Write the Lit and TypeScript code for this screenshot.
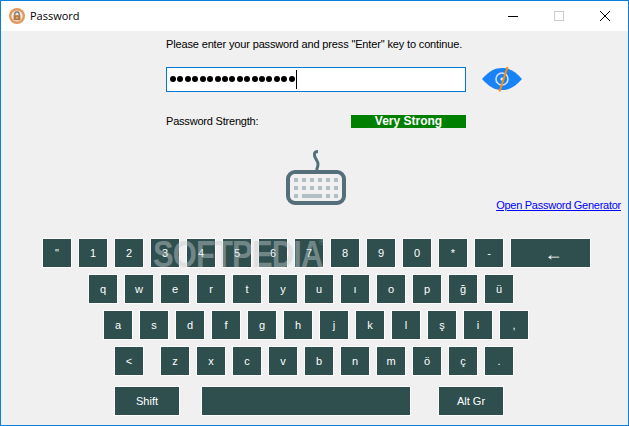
import { LitElement, html, css, svg } from "lit";
import { customElement } from "lit/decorators.js";

const rows: { cls: string; keys: string[] }[] = [
  { cls: "r2", keys: ["q", "w", "e", "r", "t", "y", "u", "ı", "o", "p", "ğ", "ü"] },
  { cls: "r3", keys: ["a", "s", "d", "f", "g", "h", "j", "k", "l", "ş", "i", ","] },
];

@customElement("app-root")
export class AppRoot extends LitElement {
  static styles = css`
    :host {
      display: block;
      width: 629px;
      height: 426px;
      box-sizing: border-box;
      border: 1px solid #0a7fdc;
      background: #f0f0f0;
      font-family: "Liberation Sans", Arial, sans-serif;
      font-size: 11px;
      color: #000;
      position: relative;
      overflow: hidden;
    }
    .title {
      height: 30px;
      background: #fff;
      display: flex;
      align-items: center;
    }
    .logo { margin-left: 8px; width: 16px; height: 16px; }
    .title-text {
      margin-left: 5px;
      font-family: "Open Sans", sans-serif;
      font-size: 11px;
      position: relative;
      top: -1px;
    }
    .controls { margin-left: auto; display: flex; }
    .ctl { width: 46px; height: 30px; display: flex; align-items: center; justify-content: center; }
    .prompt { margin: 6px 0 0 165px; height: 15px; line-height: 15px; letter-spacing: -0.145px; }
    .pw-row { margin: 14px 0 0 165px; display: flex; align-items: center; gap: 16px; }
    .input {
      width: 300px;
      height: 25px;
      box-sizing: border-box;
      border: 1px solid #0078d7;
      background: #fff;
      display: flex;
      align-items: center;
      padding-left: 3px;
      overflow: hidden;
    }
    .dots { display: flex; gap: 1.43px; }
    .dot { width: 6px; height: 6px; border-radius: 50%; background: #000; }
    .caret { width: 1px; height: 19px; background: #000; margin-left: 1px; }
    .strength { margin: 23px 0 0 165px; display: flex; align-items: center; height: 13px; }
    .strength-label { width: 185px; letter-spacing: -0.2px; position: relative; top: -1px; }
    .bar {
      width: 115px;
      height: 13px;
      background: #008000;
      color: #fff;
      font-weight: bold;
      font-size: 12px;
      line-height: 13px;
      text-align: center;
    }
    .mid { margin-top: 22px; display: flex; height: 57px; padding: 0 7px 0 285px; }
    .link {
      margin-left: auto;
      align-self: flex-end;
      color: #0000ff;
      text-decoration: underline;
      line-height: 15px;
      letter-spacing: -0.26px;
      margin-bottom: -6px;
    }
    .board { margin-top: 31px; display: flex; flex-direction: column; gap: 6px; }
    .row { display: flex; gap: 6px; }
    .r1 { padding-left: 41px; }
    .r2 { padding-left: 87px; }
    .r3 { padding-left: 102px; }
    .r4 { padding-left: 113px; }
    .r5 { padding-left: 113px; margin-top: 4px; gap: 0; }
    .key {
      width: 30px;
      height: 30px;
      box-sizing: border-box;
      border: 1px solid #fff;
      background: #2f4f4f;
      color: #fff;
      display: flex;
      align-items: center;
      justify-content: center;
      font-size: 11px;
    }
    .back { width: 81px; font-size: 18px; padding: 2px 0 0 6px; }
    .lt { margin-right: 10px; }
    .shift { width: 66px; }
    .space { width: 210px; margin: 0 27px 0 21px; }
    .mark {
      position: absolute;
      left: 152px;
      top: 231px;
      font-family: "Liberation Sans", sans-serif;
      font-weight: bold;
      font-size: 36px;
      line-height: 45px;
      letter-spacing: -1px;
      color: rgba(200, 205, 205, 0.45);
      white-space: nowrap;
      transform: scaleX(0.86);
      transform-origin: left center;
    }
    .mark sup { font-size: 9px; font-weight: normal; vertical-align: 22px; line-height: 0; letter-spacing: 0; margin-left: -4px; }
  `;

  private key(k: string, cls = "") {
    return html`<div class="key ${cls}">${k}</div>`;
  }

  render() {
    return html`
      <div class="title">
        <svg class="logo" viewBox="0 0 16 16">
          <circle cx="8" cy="8" r="8" fill="#e09a5f" />
          <circle cx="8" cy="8" r="5.6" fill="#f4e8dc" />
          <path d="M5.8 7.500V6a2.200 2.200 0 0 1 4.400 0v1.500" fill="none" stroke="#6f6f6f" stroke-width="1.200" />
          <rect x="4.600" y="7.200" width="6.800" height="5" fill="#b5793f" />
          <rect x="7.500" y="8.800" width="1" height="1.800" fill="#f4e8dc" />
        </svg>
        <span class="title-text">Password</span>
        <div class="controls">
          <div class="ctl">
            <svg width="10" height="10" viewBox="0 0 10 10"><path d="M0 5.500H10" stroke="#000" stroke-width="1" /></svg>
          </div>
          <div class="ctl">
            <svg width="10" height="10" viewBox="0 0 10 10"><rect x=".5" y=".5" width="9" height="9" fill="none" stroke="#ccc" /></svg>
          </div>
          <div class="ctl">
            <svg width="10" height="10" viewBox="0 0 10 10"><path d="M0 0L10 10M10 0L0 10" stroke="#000" stroke-width="1" /></svg>
          </div>
        </div>
      </div>
      <div class="prompt">Please enter your password and press "Enter" key to continue.</div>
      <div class="pw-row">
        <div class="input">
          <div class="dots">${Array.from({ length: 17 }, () => html`<span class="dot"></span>`)}</div>
          <div class="caret"></div>
        </div>
        <svg width="40" height="26" viewBox="0 0 40 26">
          <path d="M0 13C7 5 13 2 20 2s13 3 20 11c-7 8-13 11-20 11S7 21 0 13Z" fill="#1a82f7" />
          <circle cx="20" cy="13" r="6" fill="none" stroke="#cfe4fb" stroke-width="1.600" />
          <circle cx="20" cy="13" r="1.600" fill="#e8f2fd" />
          <path d="M25.500 1L17.500 25.500" stroke="#ff8c00" stroke-width="2" />
        </svg>
      </div>
      <div class="strength">
        <div class="strength-label">Password Strength:</div>
        <div class="bar">Very Strong</div>
      </div>
      <div class="mid">
        <svg width="60" height="57" viewBox="0 0 60 57">
          <path d="M32 1.500c-2.500 0-4 1-3.500 4 .5 3 3 5 3.500 8 .3 2.500-.5 4-1.500 6.500" fill="none" stroke="#546e7a" stroke-width="3" />
          <rect x="2" y="22" width="56" height="31" rx="7" fill="none" stroke="#546e7a" stroke-width="4" />
          <g fill="#b0bec5">
            ${[0, 1, 2, 3, 4, 5].flatMap((i) =>
              [0, 1].map((j) => svg`<rect x=${8 + i * 8} y=${28 + j * 8} width="4" height="4" />`)
            )}
            <rect x="8" y="44" width="4" height="4" />
            <rect x="16" y="44" width="20" height="4" />
            <rect x="40" y="44" width="4" height="4" />
            <rect x="48" y="44" width="4" height="4" />
          </g>
        </svg>
        <a class="link">Open Password Generator</a>
      </div>
      <div class="board">
        <div class="row r1">
          ${['"', "1", "2", "3", "4", "5", "6", "7", "8", "9", "0", "*", "-"].map((k) => this.key(k))}
          ${this.key("←", "back")}
        </div>
        ${rows.map((r) => html`<div class="row ${r.cls}">${r.keys.map((k) => this.key(k))}</div>`)}
        <div class="row r4">
          ${this.key("<", "lt")}
          ${["z", "x", "c", "v", "b", "n", "m", "ö", "ç", "."].map((k) => this.key(k))}
        </div>
        <div class="row r5">
          ${this.key("Shift", "shift")}
          <div class="key space"></div>
          ${this.key("Alt Gr", "shift")}
        </div>
      </div>
      <div class="mark">SOFTPEDIA<sup>®</sup></div>
    `;
  }
}
